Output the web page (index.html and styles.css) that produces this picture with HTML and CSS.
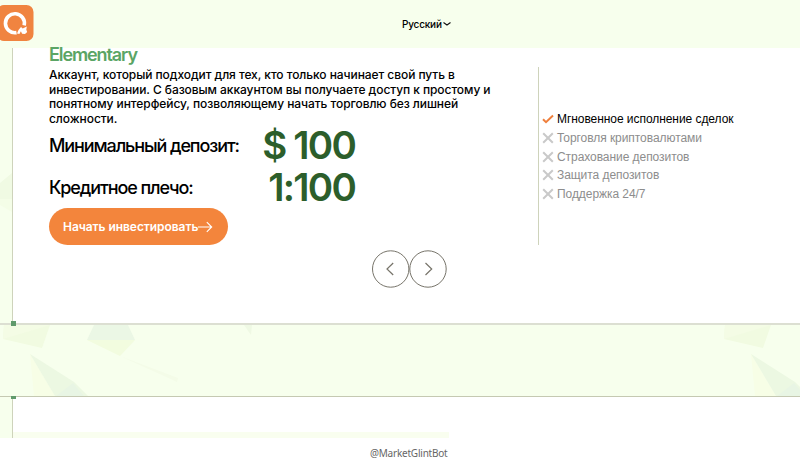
FILE: index.html
```html
<!DOCTYPE html>
<html lang="ru">
<head>
    <meta charset="UTF-8">
    <meta name="viewport" content="width=device-width, initial-scale=1.0">
    <title>Elementary</title>
    <link rel="stylesheet" href="styles.css">
</head>
<body>
    <header class="header">
        <svg class="logo" viewBox="0 0 34 36">
            <rect x="-3" y="0" width="36.500" height="36" rx="7" fill="#f08440"/>
            <path d="M16.500 27.600A9.500 9.500 0 1 1 24.200 20.300" fill="none" stroke="#fff" stroke-width="3.600"/>
            <path d="M21 22l1.700 1.600 4.100-2-.5 3.200.9 2.200-2.200 2-2.900-.3-1.200-2.400-1.500 2.600-2.400-.4 1.500-3.500z" fill="#fff"/>
        </svg>
        <div class="lang">
            <span>Русский</span>
            <svg width="8" height="6" viewBox="0 0 8 6"><path d="M.5 1.500L4 4l3.500-2.500" fill="none" stroke="#111" stroke-width="1.100"/></svg>
        </div>
    </header>

    <main class="page">
        <!-- Account card -->
        <section class="account">
            <svg class="edge" width="12" height="50" viewBox="0 0 12 50">
                <path d="M0 10L12 0V26H0z" fill="#f0fae3"/>
                <path d="M0 26H12V39L0 32z" fill="#f4fde7"/>
            </svg>
            <div class="info">
                <h2 class="title">Elementary</h2>
                <p class="description">Аккаунт, который подходит для тех, кто только начинает свой путь в<br>инвестировании. С базовым аккаунтом вы получаете доступ к простому и<br>понятному интерфейсу, позволяющему начать торговлю без лишней<br>сложности.</p>
                <div class="param">
                    <span class="param-name">Минимальный депозит:</span>
                    <span class="param-value">$ 100</span>
                </div>
                <div class="param">
                    <span class="param-name">Кредитное плечо:</span>
                    <span class="param-value">1:100</span>
                </div>
                <a class="btn" href="#">
                    <span>Начать инвестировать</span>
                    <svg width="15" height="12" viewBox="0 0 15 12"><path d="M0 6h13.700M8.800 1.200L13.700 6l-4.900 4.800" fill="none" stroke="#fff" stroke-width="1.100"/></svg>
                </a>
            </div>
            <ul class="features">
                <li class="feature active">
                    <svg width="12" height="12" viewBox="0 0 12 12"><path d="M1 6.300l3 2.900L11 2.500" fill="none" stroke="#ef7f3c" stroke-width="2"/></svg>
                    <span>Мгновенное исполнение сделок</span>
                </li>
                <li class="feature">
                    <svg width="12" height="12" viewBox="0 0 12 12"><path d="M1.200 1.200l9.600 9.600M10.800 1.200L1.200 10.800" stroke="#c9c9c9" stroke-width="2"/></svg>
                    <span>Торговля криптовалютами</span>
                </li>
                <li class="feature">
                    <svg width="12" height="12" viewBox="0 0 12 12"><path d="M1.200 1.200l9.600 9.600M10.800 1.200L1.200 10.800" stroke="#c9c9c9" stroke-width="2"/></svg>
                    <span>Страхование депозитов</span>
                </li>
                <li class="feature">
                    <svg width="12" height="12" viewBox="0 0 12 12"><path d="M1.200 1.200l9.600 9.600M10.800 1.200L1.200 10.800" stroke="#c9c9c9" stroke-width="2"/></svg>
                    <span>Защита депозитов</span>
                </li>
                <li class="feature">
                    <svg width="12" height="12" viewBox="0 0 12 12"><path d="M1.200 1.200l9.600 9.600M10.800 1.200L1.200 10.800" stroke="#c9c9c9" stroke-width="2"/></svg>
                    <span>Поддержка 24/7</span>
                </li>
            </ul>
            <!-- Slider arrows -->
            <div class="slider-nav">
                <svg width="75" height="38" viewBox="0 0 75 38" fill="none" stroke="#77746a">
                    <circle cx="18.700" cy="19" r="18.200"/>
                    <circle cx="56" cy="19" r="18.200"/>
                    <path d="M21.200 13l-6.200 6 6.200 6M53.500 13l6.200 6-6.200 6" stroke-width="1.200"/>
                </svg>
            </div>
        </section>

        <!-- Gap with the polygon pattern -->
        <div class="gap">
            <svg width="800" height="71" viewBox="0 0 800 71">
                <g id="shards">
                    <path d="M4 0H50L42 23 3 14z" fill="#f1fbe1"/>
                    <path d="M3 14L50 0H4z" fill="#f4fce5"/>
                    <path d="M30 29L34 71H55z" fill="#f7fee6"/>
                    <path d="M30 29L74 57 88 71H55z" fill="#ecf8e2"/>
                    <path d="M56 71L73 58 84 71z" fill="#e8f5e4"/>
                </g>
                <path d="M94 0H128L135 15H87z" fill="#ebf7e5"/>
                <path d="M87 15H135L120 31z" fill="#f2fcdf"/>
                <path d="M120 31L178 53 177 57z" fill="#f4fce8"/>
                <path d="M244 0H252L251 10z" fill="#eff9e4"/>
                <use href="#shards" x="721"/>
            </svg>
            <i class="marker"></i>
            <i class="marker marker-bottom"></i>
        </div>

        <section class="next">
            <div class="page-end"></div>
        </section>
    </main>

    <footer class="footer">@MarketGlintBot</footer>
</body>
</html>
```

FILE: styles.css
```css
* {
    box-sizing: border-box;
}

body {
    margin: 0;
    height: 462px;
    overflow: hidden;
    background: #fff;
    color: #000;
    font-family: Inter, "Liberation Sans", sans-serif;
}

svg {
    display: block;
    flex-shrink: 0;
}

.header {
    display: grid;
    grid-template-columns: 402px 1fr;
    height: 48px;
    padding-top: 5px;
    background: #f7ffed;
}

.logo {
    width: 34px;
    height: 36px;
}

.lang {
    display: flex;
    align-items: center;
    gap: 1px;
    height: 37px;
    font-size: 10px;
    font-weight: 500;
    letter-spacing: -0.2px;
}

.page {
    height: 390px;
    background: #fff;
}

.account {
    position: relative;
    display: grid;
    grid-template-columns: 489px 1fr;
    grid-template-rows: 197px 1fr;
    height: 275px;
    padding-left: 36px;
    border-left: 1px solid #ced3bb;
    margin-left: 12px;
    box-shadow: -12px 0 #f7ffed;
}

/* pattern showing in the margin left of the card */
.edge {
    position: absolute;
    left: -13px;
    top: 125px;
}

.title {
    margin: 0;
    height: 20px;
    line-height: 14px;
    font-size: 18px;
    font-weight: 600;
    letter-spacing: -1.1px;
    color: #5ba565;
}

.description {
    margin: 0;
    height: 57px;
    line-height: 14.5px;
    font-size: 12px;
    font-weight: 500;
    letter-spacing: -0.07px;
    white-space: nowrap;
}

.param {
    display: flex;
    align-items: center;
    justify-content: space-between;
    width: 307px;
    height: 41.500px;
    line-height: 41px;
    white-space: nowrap;
}

.param-name {
    font-size: 18px;
    font-weight: 500;
    letter-spacing: -1.1px;
}

.param-value {
    margin-right: 1px;
    font-size: 38.500px;
    font-weight: 600;
    letter-spacing: -1.8px;
    color: #2c5e2b;
}

.btn {
    display: flex;
    align-items: center;
    width: 179px;
    height: 37px;
    padding-left: 14px;
    border-radius: 19px;
    background: #f3853c;
    color: #fff;
    font-size: 12px;
    font-weight: 600;
    letter-spacing: -0.06px;
    text-decoration: none;
    white-space: nowrap;
}

.features {
    margin: 19px 0 0;
    padding: 43px 0 0 3px;
    list-style: none;
    border-left: 1px solid #ced3bb;
    font-family: "Liberation Sans", Arial, sans-serif;
    font-size: 12px;
    letter-spacing: -0.06px;
}

.feature {
    display: flex;
    align-items: center;
    gap: 3px;
    height: 18.700px;
    color: #8d8d8d;
}

.feature.active {
    color: #000;
}

.slider-nav {
    grid-column: 1 / 3;
    padding: 5px 0 0 323px;
}

.gap {
    position: relative;
    height: 74px;
    border-top: 2px solid #dcdfd2;
    border-bottom: 1px solid #c5c9b2;
    background: #f7ffed;
}

/* square corner markers */
.marker {
    position: absolute;
    left: 11px;
    top: -4px;
    width: 5px;
    height: 5px;
    background: #609a6c;
}

.marker-bottom {
    top: auto;
    bottom: -3px;
    height: 3px;
}

.next {
    height: 41px;
    padding-top: 35px;
    margin-left: 12px;
    border-left: 1px solid #ced3bb;
    box-shadow: -12px 0 #f7ffed;
}

.page-end {
    width: 436px;
    height: 6px;
    background: #f9feef;
}

.footer {
    padding-left: 370px;
    line-height: 31px;
    font-family: "Noto Sans", "Open Sans", sans-serif;
    font-size: 10px;
    letter-spacing: -0.22px;
    color: #666;
}
```
